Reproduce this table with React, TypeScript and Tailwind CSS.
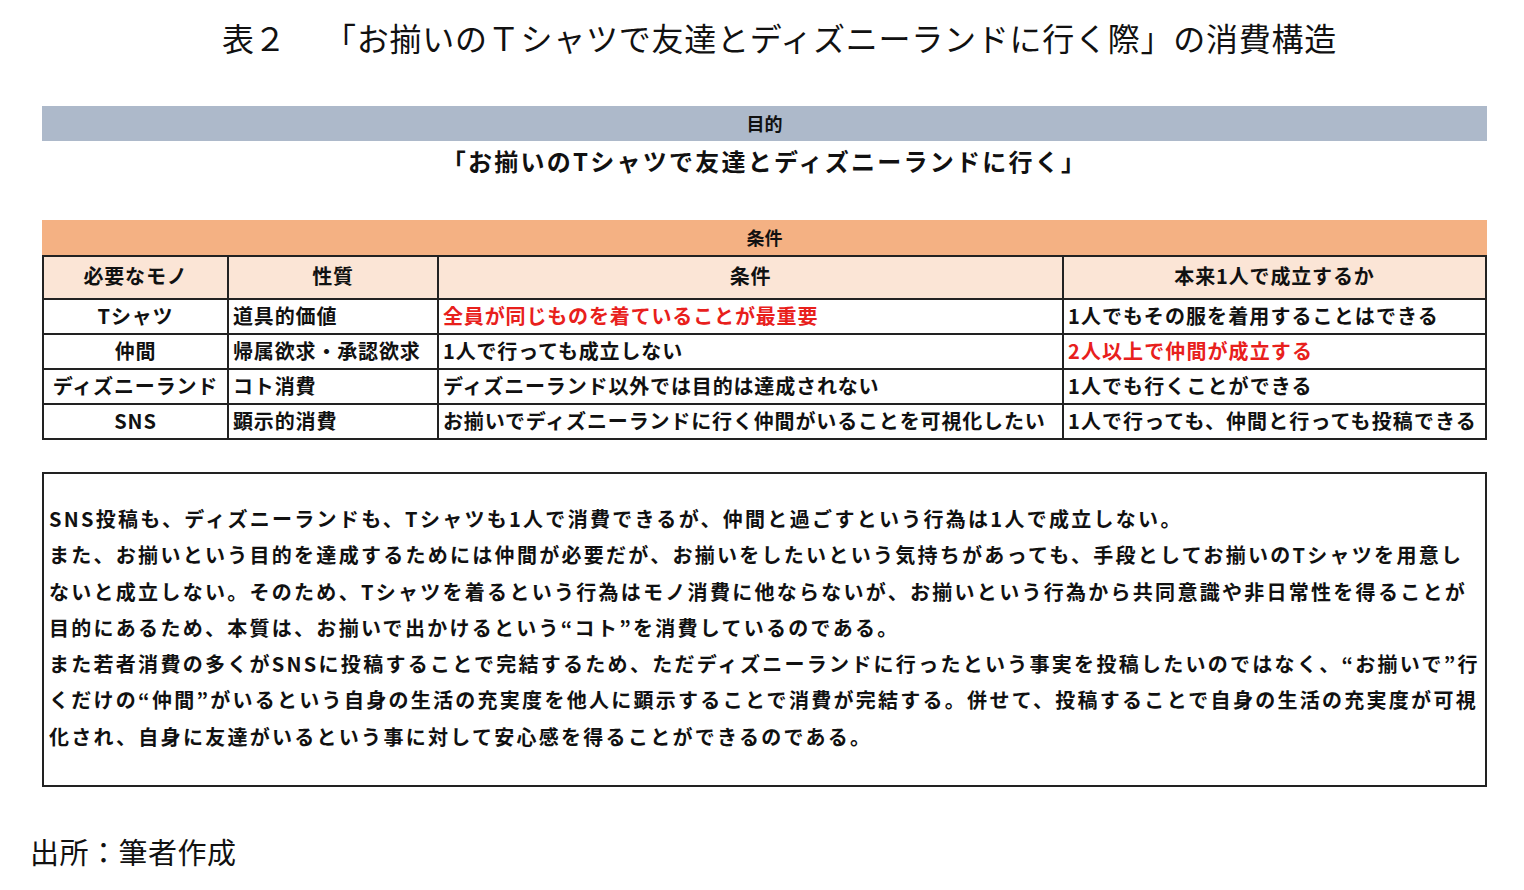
import React from "react";

const sans = { fontFamily: '"Noto Sans CJK JP", "Noto Sans", sans-serif' };

const rows = [
  { a: "Tシャツ", b: "道具的価値", c: "全員が同じものを着ていることが最重要", cRed: true, d: "1人でもその服を着用することはできる", dRed: false },
  { a: "仲間", b: "帰属欲求・承認欲求", c: "1人で行っても成立しない", cRed: false, d: "2人以上で仲間が成立する", dRed: true },
  { a: "ディズニーランド", b: "コト消費", c: "ディズニーランド以外では目的は達成されない", cRed: false, d: "1人でも行くことができる", dRed: false },
  { a: "SNS", b: "顕示的消費", c: "お揃いでディズニーランドに行く仲間がいることを可視化したい", cRed: false, d: "1人で行っても、仲間と行っても投稿できる", dRed: false },
];

const lines = [
  "SNS投稿も、ディズニーランドも、Tシャツも1人で消費できるが、仲間と過ごすという行為は1人で成立しない。",
  "また、お揃いという目的を達成するためには仲間が必要だが、お揃いをしたいという気持ちがあっても、手段としてお揃いのTシャツを用意し",
  "ないと成立しない。そのため、Tシャツを着るという行為はモノ消費に他ならないが、お揃いという行為から共同意識や非日常性を得ることが",
  "目的にあるため、本質は、お揃いで出かけるという“コト”を消費しているのである。",
  "また若者消費の多くがSNSに投稿することで完結するため、ただディズニーランドに行ったという事実を投稿したいのではなく、“お揃いで”行",
  "くだけの“仲間”がいるという自身の生活の充実度を他人に顕示することで消費が完結する。併せて、投稿することで自身の生活の充実度が可視",
  "化され、自身に友達がいるという事に対して安心感を得ることができるのである。",
];

export default function App() {
  return (
    <div className="w-[1524px] h-[890px] bg-white text-[#111] overflow-hidden" style={sans}>
      {/* Title */}
      <div
        className="h-[80px] pt-[20px] pl-[222px] flex text-[32px] leading-[40px] whitespace-nowrap font-normal"
        style={{ fontFamily: '"Liberation Serif", "Noto Sans CJK JP", serif' }}
      >
        <span>表２</span>
        <span className="ml-[38px] tracking-[0.75px]">「お揃いのＴシャツで友達とディズニーランドに行く際」の消費構造</span>
      </div>

      <div className="pl-[42px] pr-[37px]">
        {/* Purpose */}
        <div className="mt-[26px] h-[35px] bg-[#adb9ca] flex items-center justify-center text-[18px] font-bold">
          目的
        </div>
        <div className="h-[42px] pb-[2px] flex items-center justify-center text-[24px] font-bold tracking-[2.25px]">
          「お揃いのTシャツで友達とディズニーランドに行く」
        </div>

        {/* Conditions */}
        <div className="mt-[37px] h-[35px] bg-[#f4b183] flex items-center justify-center text-[18px] font-bold">
          条件
        </div>
        <table className="w-full border-collapse text-[20px] font-bold tracking-[0.85px]">
          <colgroup>
            <col className="w-[185px]" />
            <col className="w-[210px]" />
            <col className="w-[625px]" />
            <col />
          </colgroup>
          <thead>
            <tr className="h-[43px] bg-[#fbe5d6]">
              <th className="border-2 border-[#222] font-bold text-center pb-[4px]">必要なモノ</th>
              <th className="border-2 border-[#222] font-bold text-center pb-[4px]">性質</th>
              <th className="border-2 border-[#222] font-bold text-center pb-[4px]">条件</th>
              <th className="border-2 border-[#222] font-bold text-center pb-[4px]">本来1人で成立するか</th>
            </tr>
          </thead>
          <tbody>
            {rows.map((r) => (
              <tr key={r.a} className="h-[35px] leading-[29px]">
                <td className="border-2 border-[#222] text-center whitespace-nowrap pb-[2px]">{r.a}</td>
                <td className="border-2 border-[#222] pl-[4px] whitespace-nowrap pb-[2px]">{r.b}</td>
                <td className={`border-2 border-[#222] pl-[4px] whitespace-nowrap pb-[2px] ${r.cRed ? "text-[#e8201c]" : ""}`}>{r.c}</td>
                <td className={`border-2 border-[#222] pl-[4px] whitespace-nowrap pb-[2px] tracking-[1.1px] ${r.dRed ? "text-[#e8201c]" : ""}`}>{r.d}</td>
              </tr>
            ))}
          </tbody>
        </table>

        {/* Text box */}
        <div className="mt-[32px] h-[315px] border-2 border-[#222] pt-[27px] pl-[5px]">
          {lines.map((l, i) => (
            <div key={i} className="h-[36.3px] leading-[36px] text-[20px] font-bold whitespace-nowrap tracking-[2.28px]">
              {l}
            </div>
          ))}
        </div>
      </div>

      {/* Footer */}
      <div className="pl-[30px] mt-[44px] text-[29px] leading-[40px] font-normal tracking-[0.5px]">
        出所：筆者作成
      </div>
    </div>
  );
}
